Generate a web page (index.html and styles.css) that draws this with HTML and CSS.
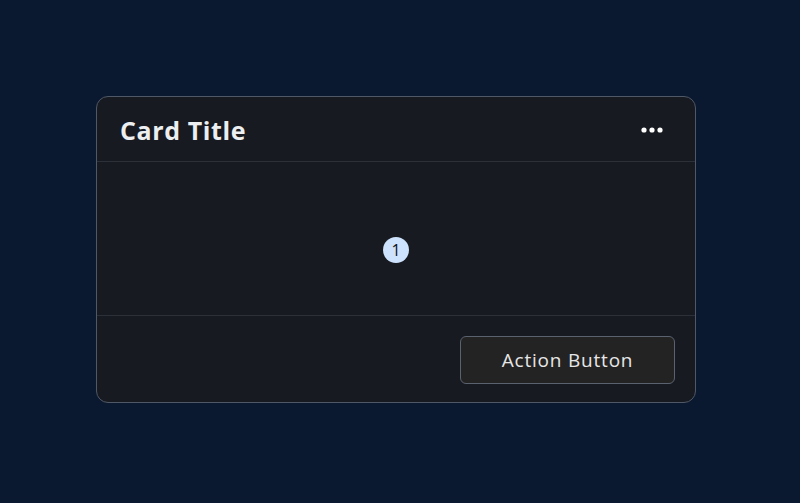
FILE: index.html
```html
<!DOCTYPE html>
<html>
<head>
<meta charset="utf-8">
<link rel="stylesheet" href="styles.css">
</head>
<body>
<div class="page">
  <div class="card">
    <div class="card-header">
      <h2 class="card-title">Card Title</h2>
      <button class="more" aria-label="More">
        <svg width="22" height="6" viewBox="0 0 22 6"><circle cx="3" cy="3" r="2.6" fill="#fff"/><circle cx="11" cy="3" r="2.6" fill="#fff"/><circle cx="19" cy="3" r="2.6" fill="#fff"/></svg>
      </button>
    </div>
    <div class="card-body">
      <span class="badge">1</span>
    </div>
    <div class="card-footer">
      <button class="action">Action Button</button>
    </div>
  </div>
</div>
</body>
</html>
```
FILE: styles.css
```css
* { box-sizing: border-box; }
html, body { margin: 0; padding: 0; }
body {
  background: #0a1830;
  font-family: "Open Sans", Inter, sans-serif;
  width: 800px;
  height: 503px;
  overflow: hidden;
}
.page {
  padding-top: 96px;
  padding-left: 96px;
}
.card {
  width: 600px;
  height: 307px;
  background: #171a20;
  border: 1px solid #4f5867;
  border-radius: 12px;
  display: flex;
  flex-direction: column;
}
.card-header {
  height: 65px;
  display: flex;
  align-items: center;
  justify-content: space-between;
  padding: 2px 32px 0 23px;
  border-bottom: 1px solid #2c3039;
}
.card-title {
  margin: 0;
  font-size: 25px;
  font-weight: 700;
  color: #eceef0;
  letter-spacing: 0.6px;
}
.more {
  background: none;
  border: 0;
  padding: 0;
  display: flex;
}
.card-body {
  height: 154px;
  display: flex;
  align-items: center;
  justify-content: center;
  padding-top: 23px;
  border-bottom: 1px solid #2c3039;
}
.badge {
  width: 26px;
  height: 26px;
  border-radius: 50%;
  background: #cde2fc;
  color: #111;
  font-size: 16px;
  font-weight: 500;
  display: flex;
  align-items: center;
  justify-content: center;
}
.card-footer {
  flex: 1;
  display: flex;
  justify-content: flex-end;
  align-items: flex-start;
  padding: 20px 20px 0 0;
}
.action {
  width: 215px;
  height: 48px;
  background: #232323;
  border: 1px solid #5a6270;
  border-radius: 6px;
  color: #e6e6e6;
  font-family: "Open Sans", Inter, sans-serif;
  font-size: 19px;
  font-weight: 500;
  letter-spacing: 0.8px;
}
```
